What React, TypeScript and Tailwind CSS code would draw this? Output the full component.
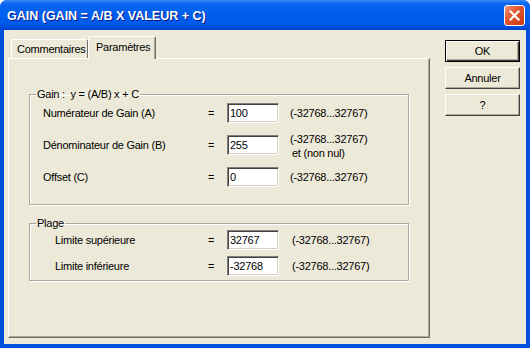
const font = { fontFamily: '"Liberation Sans", Arial, sans-serif' };

const gainRows = [
  { label: 'Numérateur de Gain (A)', value: '100', range: ['(-32768...32767)'] },
  { label: 'Dénominateur de Gain (B)', value: '255', range: ['(-32768...32767)', ' et (non nul)'] },
  { label: 'Offset (C)', value: '0', range: ['(-32768...32767)'] },
];

const plageRows = [
  { label: 'Limite supérieure', value: '32767' },
  { label: 'Limite inférieure', value: '-32768' },
];

function Field({ value }: { value: string }) {
  return (
    <input
      readOnly
      defaultValue={value}
      className="w-[52px] h-[20px] bg-white text-black text-[11px] pl-[2px] outline-none border border-t-[#808080] border-l-[#808080] border-r-white border-b-white shadow-[inset_1px_1px_0_#404040,inset_-1px_-1px_0_#D4D0C8]"
      style={font}
    />
  );
}

function Button({ label, primary }: { label: string; primary?: boolean }) {
  return (
    <button
      className={
        'w-[75px] h-[22px] text-[11px] text-black bg-[#ECE9D8] border ' +
        (primary
          ? 'border-black shadow-[inset_1px_1px_0_#fff,inset_-1px_-1px_0_#404040,inset_-2px_-2px_0_#ACA899]'
          : 'border-t-white border-l-white border-r-[#404040] border-b-[#404040] shadow-[inset_-1px_-1px_0_#ACA899]')
      }
      style={font}
    >
      {label}
    </button>
  );
}

export default function App() {
  return (
    <div className="w-[530px] h-[348px] bg-white" style={font}>
      <div className="w-full h-full flex flex-col rounded-t-[7px] bg-[#0050E0] overflow-hidden">
        {/* title bar */}
        <div className="h-[30px] flex items-center justify-between pl-[7px] pr-[5px] bg-[linear-gradient(180deg,#3A8AF8_0%,#0D66F0_12%,#0060EE_40%,#005AEA_75%,#004EDD_92%,#0040C8_100%)]">
          <span className="text-white text-[12.5px] font-bold pt-[2px] [text-shadow:1px_1px_0_#0A1883]">
            GAIN (GAIN = A/B X VALEUR + C)
          </span>
          <div className="w-[21px] h-[21px] rounded-[3px] border border-white flex items-center justify-center bg-[linear-gradient(135deg,#F29A7C_0%,#E2582F_40%,#C73A12_100%)]">
            <svg width="11" height="11" viewBox="0 0 11 11">
              <path d="M1.5 1.5 L9.5 9.5 M9.5 1.5 L1.5 9.5" stroke="white" strokeWidth="2.2" strokeLinecap="square" />
            </svg>
          </div>
        </div>

        {/* body */}
        <div className="flex-1 mx-[4px] mb-[4px] bg-[#ECE9D8] flex text-black text-[11px] tracking-[-0.25px]">
          <div className="ml-[4px] mt-[6px] mb-[6px] w-[422px] flex flex-col">
            {/* tabs */}
            <div className="h-[22px] flex items-end pl-[3px]">
              <div className="w-[77px] h-[19px] bg-[#ECE9D8] border-t border-l border-white border-r border-r-[#716F64] rounded-t-[2px] pl-[5px] pt-[2px] leading-[14px]">
                Commentaires
              </div>
              <div className="relative z-10 w-[68px] h-[23px] -mb-[1px] bg-[#ECE9D8] border-t border-l border-white border-r border-r-[#716F64] shadow-[inset_-1px_0_0_#ACA899] rounded-t-[2px] pl-[7px] pt-[3px] leading-[14px]">
                Paramètres
              </div>
            </div>

            {/* panel */}
            <div className="flex-1 border border-t-white border-l-white border-r-[#716F64] border-b-[#716F64] shadow-[inset_-1px_-1px_0_#ACA899] px-[20px] pt-[29px]">
              <fieldset className="border border-[#ACA899] shadow-[inset_1px_1px_0_#fff,1px_1px_0_#fff] pb-[17px]">
                <legend className="ml-[6px] px-[1px] leading-[13px]">Gain :&nbsp; y = (A/B) x + C</legend>
                <div className="mt-[2px] flex flex-col gap-[12px] pl-[13px]">
                  {gainRows.map((r) => (
                    <div key={r.label} className="h-[20px] flex items-center">
                      <span className="w-[165px]">{r.label}</span>
                      <span className="w-[19px]">=</span>
                      <Field value={r.value} />
                      {r.range.length > 1 ? (
                        <div className="ml-[11px] self-start -mt-[3px] leading-[14px] flex flex-col">
                          <span>{r.range[0]}</span>
                          <span className="pl-[2px]">et (non nul)</span>
                        </div>
                      ) : (
                        <span className="ml-[11px]">{r.range[0]}</span>
                      )}
                    </div>
                  ))}
                </div>
              </fieldset>

              <fieldset className="mt-[12px] border border-[#ACA899] shadow-[inset_1px_1px_0_#fff,1px_1px_0_#fff] pb-[4px]">
                <legend className="ml-[6px] px-[1px] leading-[13px]">Plage</legend>
                <div className="flex flex-col gap-[6px] pl-[25px]">
                  {plageRows.map((r) => (
                    <div key={r.label} className="h-[20px] flex items-center">
                      <span className="w-[153px]">{r.label}</span>
                      <span className="w-[19px]">=</span>
                      <Field value={r.value} />
                      <span className="ml-[13px]">(-32768...32767)</span>
                    </div>
                  ))}
                </div>
              </fieldset>
            </div>
          </div>

          {/* buttons */}
          <div className="ml-[15px] mt-[10px] flex flex-col gap-[5px]">
            <Button label="OK" primary />
            <Button label="Annuler" />
            <Button label="?" />
          </div>
        </div>
      </div>
    </div>
  );
}
